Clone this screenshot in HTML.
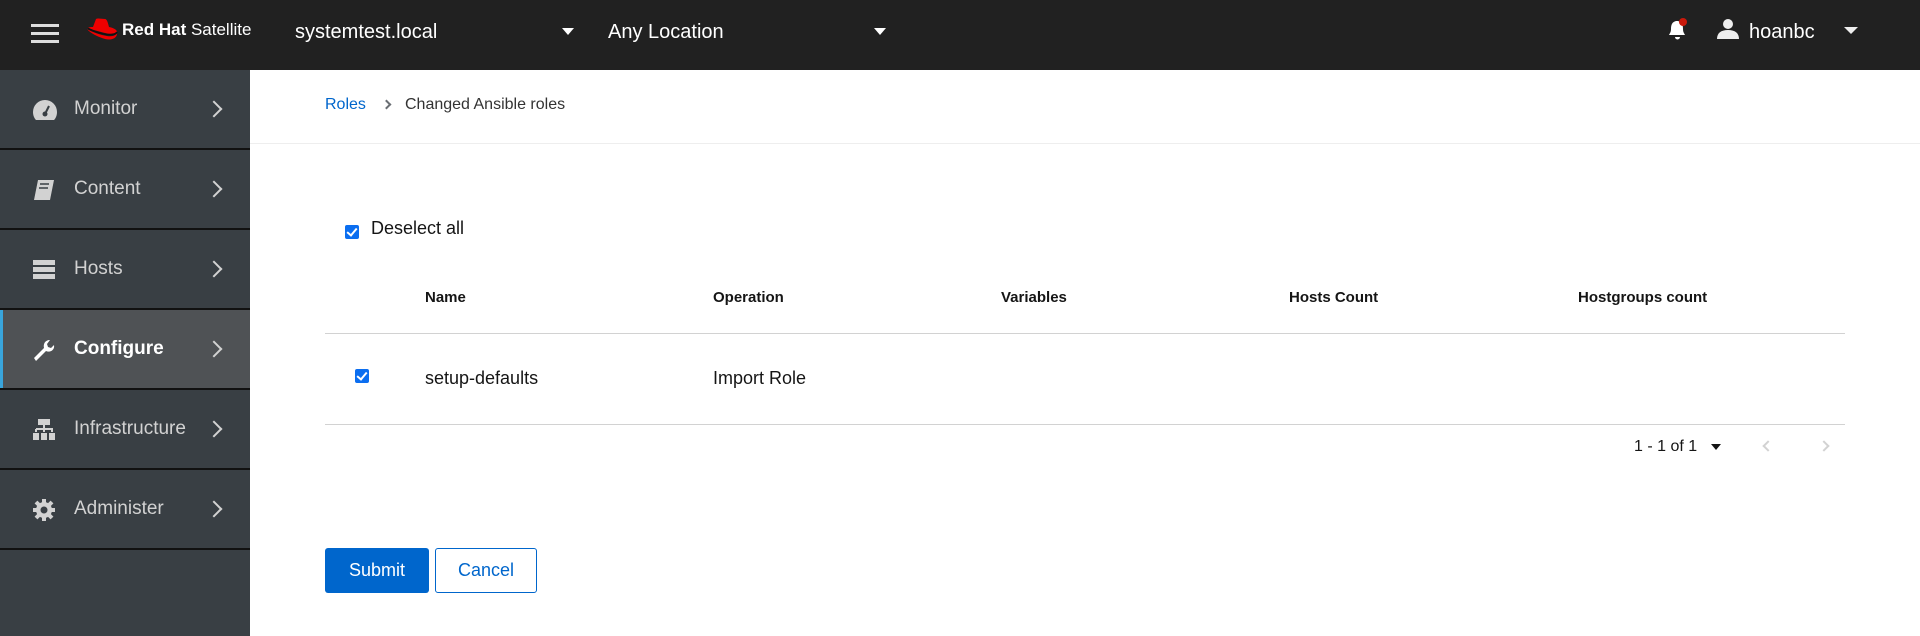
<!DOCTYPE html>
<html><head><meta charset="utf-8"><style>
*{margin:0;padding:0;box-sizing:border-box}
body{width:1920px;height:636px;overflow:hidden;font-family:"Liberation Sans",sans-serif;background:#fff;position:relative}
.hdr{position:absolute;left:0;top:0;width:1920px;height:70px;background:#212121;color:#fff}
.a{position:absolute}
.side{position:absolute;left:0;top:70px;width:250px;height:566px;background:#393f44}
.item{position:absolute;left:0;width:250px;height:80px;border-bottom:2px solid #111;color:#d2d2d2;font-size:19px}
.item .t{position:absolute;left:74px;top:28px}
.item .ch{position:absolute;left:208px;top:33px;width:12px;height:12px;border-right:2.5px solid #d2d2d2;border-top:2.5px solid #d2d2d2;transform:rotate(45deg)}
.item svg{position:absolute;left:32px;top:28px}
.th{position:absolute;top:289px;font-size:15px;font-weight:bold;color:#151515}
.cb{position:absolute;width:14px;height:14px;background:#0b6ef0;border-radius:2px}
.cb:after{content:"";position:absolute;left:4px;top:1px;width:4px;height:8px;border-right:2px solid #fff;border-bottom:2px solid #fff;transform:rotate(40deg)}
</style></head><body>
<div class="hdr">
 <div class="a" style="left:31px;top:24px;width:28px;height:3px;background:#ddd;box-shadow:0 8px 0 #ddd,0 16px 0 #ddd"></div>
 <svg class="a" style="left:84px;top:16px" width="34" height="28" viewBox="0 0 34 28"><path d="M12 3c2-1 6 0 9 0 2 0 3 4 4 8 5 1 8 3 8 5 0 2-4 3-12 1C13 15 6 13 4 12c1-1 3-1 5-1z" fill="#e00"/><path d="M3 13c5 3 13 6 20 7 6 1 10-1 10-4 1 5-4 9-12 7C14 21 6 17 3 13z" fill="#e00"/><path d="M4 12.5c5 2.5 12 5 19 6 5 .6 9-.3 10-2.5" stroke="#111" stroke-width="1.8" fill="none"/></svg>
 <div class="a" style="left:122px;top:20px;font-size:17px;"><b>Red Hat</b> Satellite</div>
 <div class="a" style="left:295px;top:21px;font-size:20px">systemtest.local</div>
 <div class="a" style="left:562px;top:28px;border:6px solid transparent;border-top:7px solid #fff"></div>
 <div class="a" style="left:608px;top:21px;font-size:20px">Any Location</div>
 <div class="a" style="left:874px;top:28px;border:6px solid transparent;border-top:7px solid #fff"></div>
 <svg class="a" style="left:1666px;top:18px" width="24" height="24" viewBox="0 0 24 24"><path d="M10 3c-4 1-5 4-5 8 0 3-1 4-2 6h16c-1-2-2-3-2-6 0-4-1-7-5-8zM9 19a2.5 2.5 0 0 0 5 0z" fill="#fff"/><circle cx="17" cy="4" r="4" fill="#c9190b"/></svg>
 <svg class="a" style="left:1716px;top:17px" width="24" height="24" viewBox="0 0 24 24"><circle cx="12" cy="7" r="5" fill="#eee"/><path d="M1 22c0-6 4-9 11-9s11 3 11 9z" fill="#eee"/></svg>
 <div class="a" style="left:1749px;top:21px;font-size:20px">hoanbc</div>
 <div class="a" style="left:1844px;top:27px;border:7px solid transparent;border-top:7px solid #eee"></div>
</div>
<div class="side">
 <div class="item" style="top:0"><svg width="26" height="24" viewBox="0 0 26 24"><path d="M13 2a12 12 0 0 0-12 12c0 3 1 6 3 8h18c2-2 3-5 3-8A12 12 0 0 0 13 2z" fill="#d2d2d2"/><circle cx="13" cy="16" r="2.5" fill="#393f44"/><path d="M13 16l4-8" stroke="#393f44" stroke-width="2"/></svg><span class="t">Monitor</span><i class="ch"></i></div>
 <div class="item" style="top:80px"><svg width="24" height="24" viewBox="0 0 24 24"><path d="M6 2h16l-4 20H2z" fill="#d2d2d2"/><path d="M8 6h9M7 10h9" stroke="#393f44" stroke-width="1.5"/></svg><span class="t">Content</span><i class="ch"></i></div>
 <div class="item" style="top:160px"><svg width="24" height="24" viewBox="0 0 24 24"><rect x="1" y="2" width="22" height="5" fill="#d2d2d2"/><rect x="1" y="9" width="22" height="5" fill="#d2d2d2"/><rect x="1" y="16" width="22" height="5" fill="#d2d2d2"/></svg><span class="t">Hosts</span><i class="ch"></i></div>
 <div class="item" style="top:240px;background:#4f5255;color:#fff;font-weight:bold"><div class="a" style="left:0;top:0;width:3px;height:78px;background:#39a5dc"></div><svg width="24" height="24" viewBox="0 0 24 24"><path d="M2 20l10-10c-1-4 1-8 6-8l-3 4 1 3 3 1 3-3c1 5-4 8-8 6L4 23z" fill="#fff"/></svg><span class="t">Configure</span><i class="ch"></i></div>
 <div class="item" style="top:320px"><svg width="24" height="24" viewBox="0 0 24 24"><rect x="6" y="1" width="12" height="6" fill="#d2d2d2"/><path d="M12 7v4M4 11h16v3M4 11v3M12 11v3" stroke="#d2d2d2" stroke-width="2" fill="none"/><rect x="1" y="15" width="6" height="7" fill="#d2d2d2"/><rect x="9" y="15" width="6" height="7" fill="#d2d2d2"/><rect x="17" y="15" width="6" height="7" fill="#d2d2d2"/></svg><span class="t">Infrastructure</span><i class="ch"></i></div>
 <div class="item" style="top:400px"><svg width="24" height="24" viewBox="0 0 24 24"><circle cx="12" cy="12" r="8" fill="#d2d2d2"/><path d="M12 1v22M1 12h22M4 4l16 16M20 4L4 20" stroke="#d2d2d2" stroke-width="4"/><circle cx="12" cy="12" r="3.5" fill="#393f44"/></svg><span class="t">Administer</span><i class="ch"></i></div>
</div>
<div class="a" style="left:325px;top:96px;font-size:16px;color:#06c">Roles</div>
<div class="a" style="left:383px;top:101px;width:7px;height:7px;border-right:2px solid #6a6e73;border-top:2px solid #6a6e73;transform:rotate(45deg)"></div>
<div class="a" style="left:405px;top:96px;font-size:16px;color:#333">Changed Ansible roles</div>
<div class="a" style="left:250px;top:143px;width:1670px;height:1px;background:#eee"></div>
<div class="cb" style="left:345px;top:225px"></div>
<div class="a" style="left:371px;top:218px;font-size:18px;color:#151515">Deselect all</div>
<div class="th" style="left:425px">Name</div>
<div class="th" style="left:713px">Operation</div>
<div class="th" style="left:1001px">Variables</div>
<div class="th" style="left:1289px">Hosts Count</div>
<div class="th" style="left:1578px">Hostgroups count</div>
<div class="a" style="left:325px;top:333px;width:1520px;height:1px;background:#d2d2d2"></div>
<div class="cb" style="left:355px;top:369px"></div>
<div class="a" style="left:425px;top:368px;font-size:18px;color:#151515">setup-defaults</div>
<div class="a" style="left:713px;top:368px;font-size:18px;color:#151515">Import Role</div>
<div class="a" style="left:325px;top:424px;width:1520px;height:1px;background:#d2d2d2"></div>
<div class="a" style="left:1634px;top:438px;font-size:16px;color:#151515">1 - 1 of 1</div>
<div class="a" style="left:1711px;top:444px;border:5px solid transparent;border-top:6px solid #151515"></div>
<div class="a" style="left:1764px;top:442px;width:8px;height:8px;border-left:2px solid #d2d2d2;border-bottom:2px solid #d2d2d2;transform:rotate(45deg)"></div>
<div class="a" style="left:1820px;top:442px;width:8px;height:8px;border-right:2px solid #d2d2d2;border-top:2px solid #d2d2d2;transform:rotate(45deg)"></div>
<div class="a" style="left:325px;top:548px;width:104px;height:45px;background:#06c;border-radius:3px;color:#fff;font-size:18px;text-align:center;line-height:45px">Submit</div>
<div class="a" style="left:435px;top:548px;width:102px;height:45px;border:1px solid #06c;border-radius:3px;color:#06c;font-size:18px;text-align:center;line-height:43px">Cancel</div>
</body></html>
